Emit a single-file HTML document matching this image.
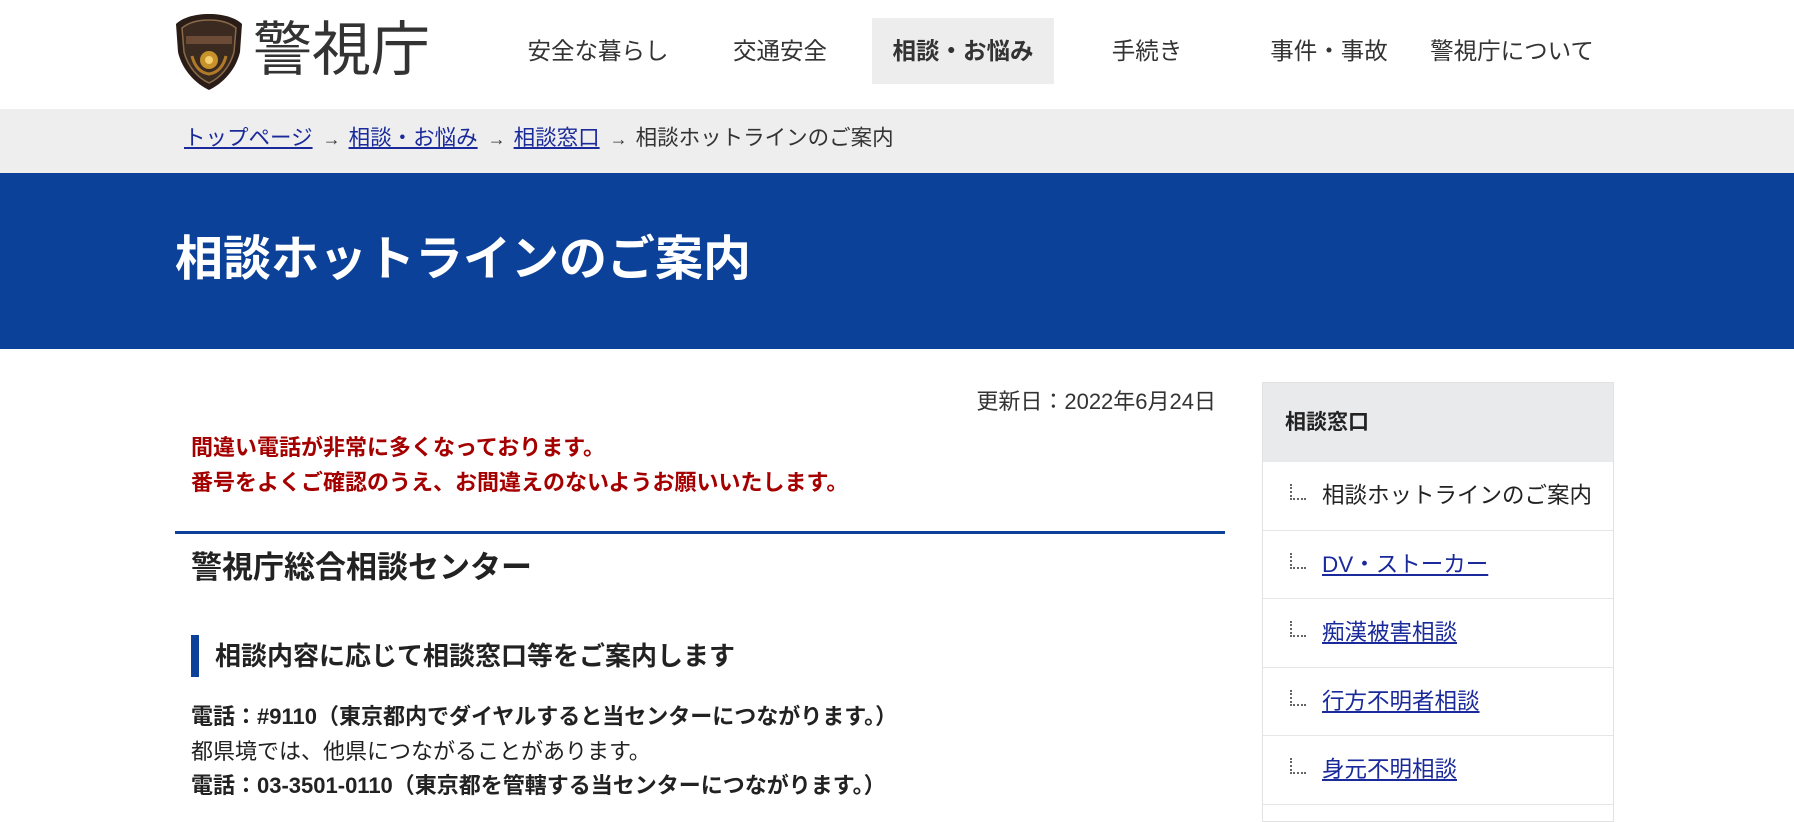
<!DOCTYPE html>
<html><head><meta charset="utf-8"><style>
*{margin:0;padding:0;box-sizing:border-box}
body{width:1794px;height:813px;overflow:hidden;background:#fff;font-family:"Liberation Sans","Noto Sans CJK JP",sans-serif;color:#222;position:relative}
.a{position:absolute;white-space:nowrap}
.nav{top:18px;height:66px;line-height:66px;font-size:23.5px;color:#333;text-align:center}
a{color:#1a2a9a;text-decoration:underline}
.bc{top:121px;font-size:21.5px;line-height:34px}
.ar{font-size:18px;color:#333;margin:0 8px 0 10px}
.side{position:absolute;left:1262px;top:382px;width:352px;height:440px;border:1px solid #e2e2e2}
.sh{height:79px;background:#e9eaec;font-weight:bold;font-size:21px;line-height:79px;padding-left:22px}
.row{height:68.6px;border-bottom:1px solid #e6e6e6;position:relative;font-size:22.5px;line-height:68px;padding-left:59px}
.row:before{content:"";position:absolute;left:27px;top:22px;width:14px;height:14px;border-left:2px dotted #666;border-bottom:2px dotted #666}
</style></head><body>
<svg class="a" style="left:174px;top:12px" width="70" height="80" viewBox="0 0 70 80">
<path d="M35 2 C20 2 8 6 2 12 L4 40 C8 58 22 72 35 78 C48 72 62 58 66 40 L68 12 C62 6 50 2 35 2Z" fill="#2a1d17"/>
<path d="M35 8 C23 8 14 11 8 16 L10 40 C14 55 24 66 35 71 C46 66 56 55 60 40 L62 16 C56 11 47 8 35 8Z" fill="#3a2a20" stroke="#8a6a4a" stroke-width="1.5"/>
<rect x="12" y="24" width="46" height="8" fill="#6b4a36"/>
<circle cx="35" cy="48" r="9" fill="#c8922a"/><circle cx="35" cy="48" r="4" fill="#f4d070"/>
<path d="M18 44 Q22 60 35 62 Q48 60 52 44" fill="none" stroke="#b07a2a" stroke-width="3"/>
</svg>
<div class="a" style="left:253px;top:13px;font-size:59px;line-height:74px;color:#333">警視庁</div>
<div class="a nav" style="left:508px;width:180px">安全な暮らし</div>
<div class="a nav" style="left:700px;width:160px">交通安全</div>
<div class="a nav" style="left:872px;width:182px;background:#ededed;font-weight:bold">相談・お悩み</div>
<div class="a nav" style="left:1075px;width:144px">手続き</div>
<div class="a nav" style="left:1245px;width:168px">事件・事故</div>
<div class="a nav" style="left:1420px;width:184px">警視庁について</div>
<div class="a" style="left:0;top:109px;width:1794px;height:64px;background:#eeeeee"></div>
<div class="a bc" style="left:184px"><a href="#">トップページ</a><span class="ar">→</span><a href="#">相談・お悩み</a><span class="ar">→</span><a href="#">相談窓口</a><span class="ar">→</span><span style="color:#333">相談ホットラインのご案内</span></div>
<div class="a" style="left:0;top:173px;width:1794px;height:176px;background:#0b4199"></div>
<div class="a" style="left:175px;top:228px;font-size:48px;line-height:64px;font-weight:bold;color:#fff">相談ホットラインのご案内</div>
<div class="a" style="right:578px;top:386px;font-size:22px;line-height:32px;color:#333">更新日：2022年6月24日</div>
<div class="a" style="left:191px;top:431px;font-size:22px;line-height:34.5px;font-weight:bold;color:#a50000">間違い電話が非常に多くなっております。<br>番号をよくご確認のうえ、お間違えのないようお願いいたします。</div>
<div class="a" style="left:175px;top:531px;width:1050px;height:3px;background:#0b4199"></div>
<div class="a" style="left:191px;top:547px;font-size:31px;line-height:42px;font-weight:bold;color:#222">警視庁総合相談センター</div>
<div class="a" style="left:191px;top:635px;width:8px;height:42px;background:#0b4199"></div>
<div class="a" style="left:215px;top:638px;font-size:26px;line-height:36px;font-weight:bold;color:#222">相談内容に応じて相談窓口等をご案内します</div>
<div class="a" style="left:191px;top:700px;font-size:22px;line-height:34.5px;color:#222"><b>電話：#9110（東京都内でダイヤルすると当センターにつながります。）</b><br>都県境では、他県につながることがあります。<br><b>電話：03-3501-0110（東京都を管轄する当センターにつながります。）</b></div>
<div class="side">
<div class="sh">相談窓口</div>
<div class="row" style="color:#222">相談ホットラインのご案内</div>
<div class="row"><a href="#">DV・ストーカー</a></div>
<div class="row"><a href="#">痴漢被害相談</a></div>
<div class="row"><a href="#">行方不明者相談</a></div>
<div class="row"><a href="#">身元不明相談</a></div>
</div>
</body></html>
